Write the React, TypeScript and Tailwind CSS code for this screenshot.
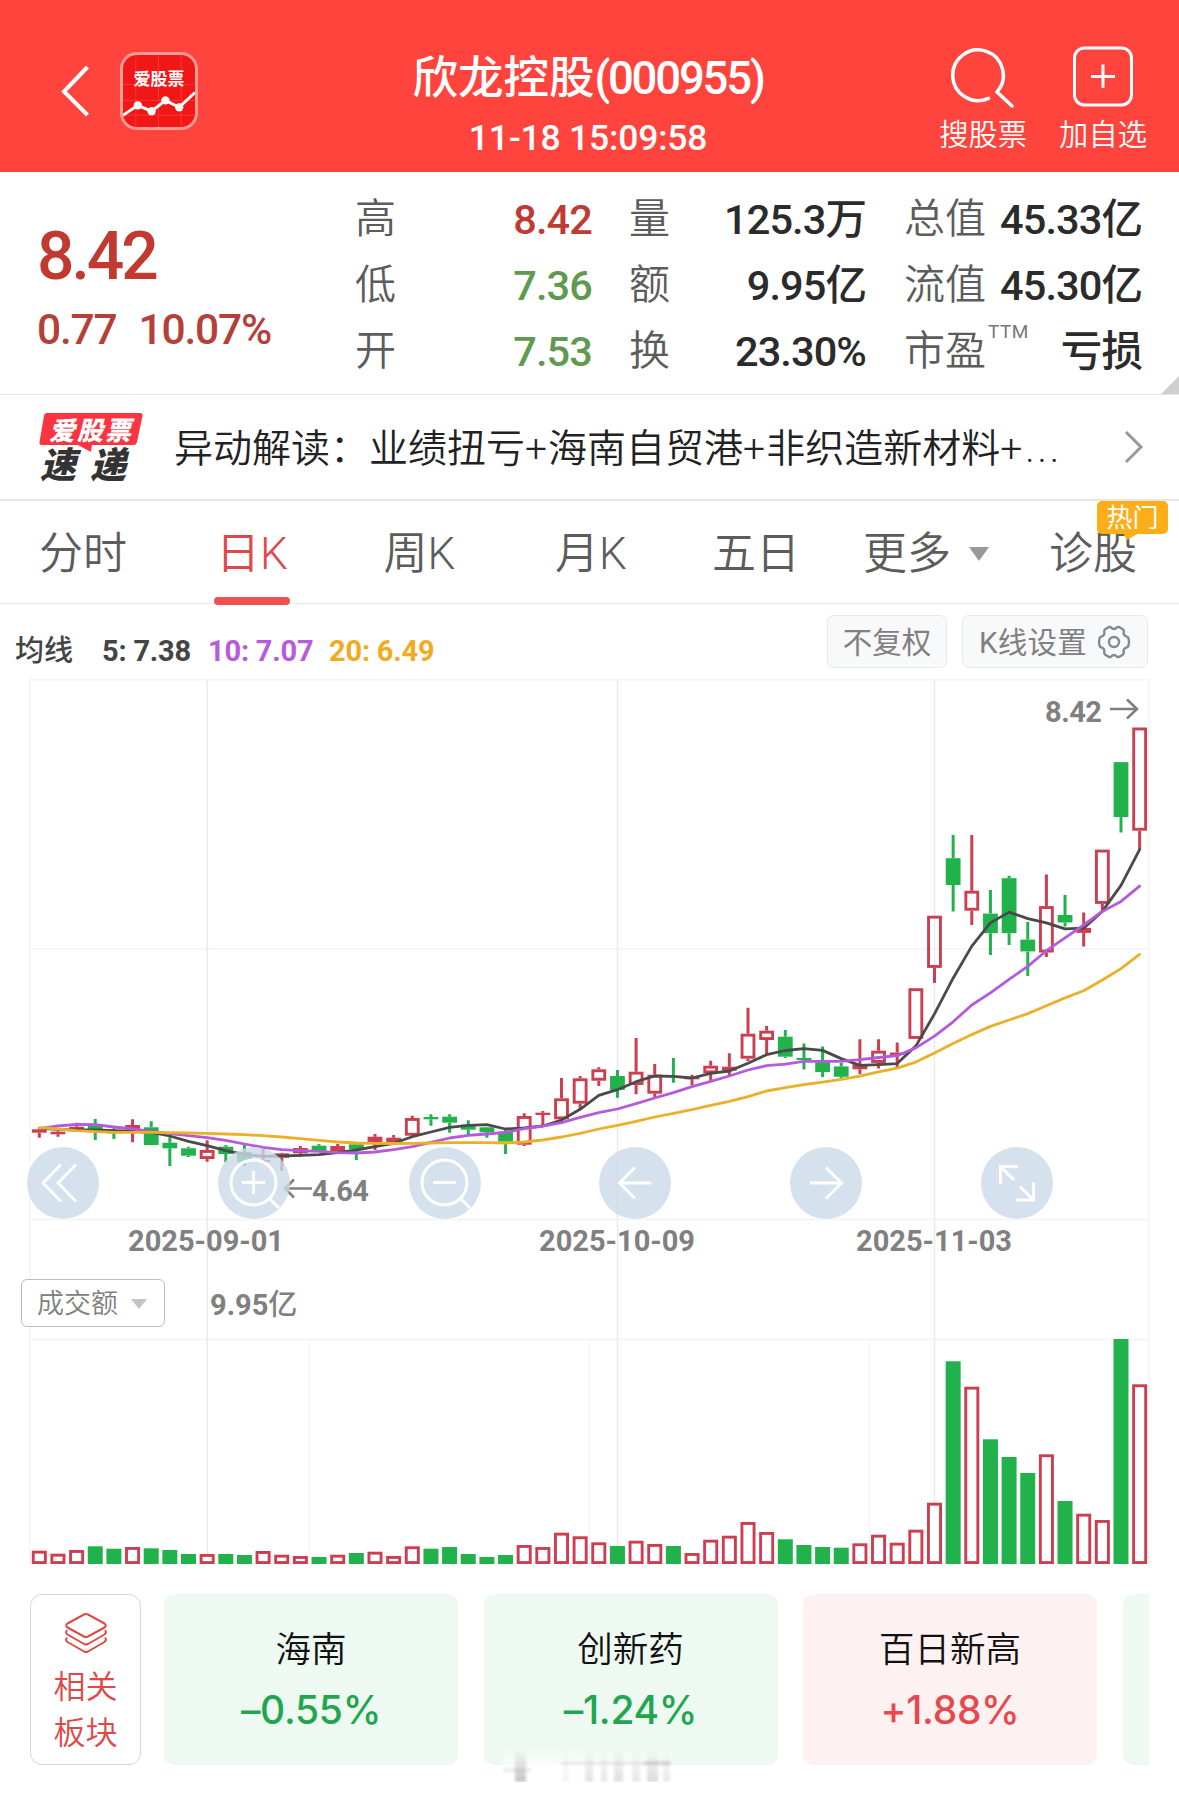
import type { ReactNode } from 'react'

type Candle = [up: number, high: number, top: number, bottom: number, low: number]

const RED = '#cb3f50'
const GREEN = '#22b24c'
const STEP = 18.65
const FIRST_X = 39.3
const BAR = 14.8

const candles: Candle[] = [
  [1, 448.7, 450.3, 453.7, 458.7], [1, 451.7, 452.7, 455.3, 457.7], [1, 443.7, 447.7, 451.7, 452.5],
  [0, 440, 446.3, 451.7, 461], [0, 449.3, 452.3, 454.3, 460], [1, 440.3, 446, 452, 463.3],
  [0, 442.3, 448.3, 466, 466], [0, 458.3, 463.7, 469.3, 487], [0, 467.7, 469.3, 476.7, 478],
  [1, 461.3, 471, 480, 482.7], [0, 466, 467.7, 475, 483.3], [0, 465, 473, 483, 487],
  [1, 468.3, 481, 483, 483.3], [1, 473.7, 474.3, 478.7, 491.7], [1, 467, 469, 474.3, 477.7],
  [0, 465, 466.7, 472, 472], [1, 465, 467, 472.3, 472.3], [0, 465.3, 465.3, 470, 481],
  [1, 455, 457.7, 463.7, 471], [1, 456, 458.7, 463, 465], [1, 436.7, 439, 456.7, 458.3],
  [0, 435.3, 438, 440.3, 446.7], [0, 435.3, 437.7, 443.7, 453.7], [0, 441.3, 445.7, 450.7, 455.7],
  [0, 448, 448.3, 453.3, 458.7], [0, 450, 452.7, 462.7, 475], [1, 434.3, 437, 465.7, 467],
  [1, 432, 433.7, 436, 446], [1, 399, 419.3, 440.3, 445], [1, 397, 399.3, 424.7, 430.3],
  [1, 388.3, 390.3, 401.7, 407], [0, 391, 397, 411, 418.7], [1, 359, 392.7, 406, 415.3],
  [1, 385, 395.7, 414.7, 419.3], [0, 379, 397, 398.5, 403.7], [1, 395.7, 398, 400.3, 406.3],
  [1, 381.7, 386.7, 394.3, 402], [1, 374.3, 387.7, 391.7, 397.7], [1, 328.7, 354.7, 379.7, 382],
  [1, 347, 351.7, 361, 375], [0, 351, 357.7, 377.7, 379], [0, 364.6, 378.9, 381, 390.6],
  [0, 367.4, 383.1, 393.1, 398.1], [0, 383.9, 387.4, 397.8, 399.2], [1, 360.3, 385.3, 390.3, 395.3],
  [1, 360.3, 371.7, 383.9, 389.6], [1, 363.5, 373.5, 376, 389.6], [1, 309.2, 309.2, 359.9, 359.9],
  [1, 236.7, 236.7, 288.9, 303.9], [0, 156, 179.2, 206, 232.4], [1, 156, 211.7, 231.7, 246],
  [0, 211, 234.6, 254.2, 276], [0, 196.7, 199.2, 254.2, 266], [0, 243.1, 260.6, 272.4, 297.1],
  [1, 195.6, 227.1, 273.5, 278.1], [0, 216, 236, 243.5, 247.4], [1, 233.5, 248.9, 253.9, 267.4],
  [1, 170.6, 170.6, 224.9, 231.4], [0, 83.1, 83.1, 138.1, 153.5], [1, 48.5, 48.5, 151.7, 170.6],
]

const volumes = [
  13.3, 10.3, 14, 17.7, 15.3, 17, 15.7, 14, 10, 10, 10, 9, 13, 9.3, 8, 7, 9.3, 11, 12.3, 8,
  17.7, 15.3, 17, 10, 7, 9, 19, 17, 31.3, 27.7, 21.7, 18, 23.3, 20, 18, 11, 24.3, 28.3, 42, 32,
  24.7, 19, 17, 16.3, 20.7, 29.3, 21.3, 34.3, 61.3, 202.7, 177.3, 124.7, 107, 91, 109.7, 63, 50.3, 44, 225.3, 179.7,
]

const ma5 = [
  449.3, 450.3, 451, 451, 451.7, 452.3, 453.3, 457, 462.3, 466.7, 471.7, 475.3, 477.3, 477, 476.3, 475.7, 473.7, 471, 467.7, 464.3,
  457.7, 453, 448.3, 446.3, 445.7, 450, 449, 447, 441, 430.3, 416.3, 410.7, 402.7, 397, 397.3, 399, 394.3, 392, 384.3, 375.7,
  371.5, 369.6, 371.4, 379.6, 386.4, 385.6, 384.6, 367.1, 334.9, 299.2, 267.1, 243.9, 233.1, 239.6, 243.9, 249.9, 249.2, 232.4, 206.4, 170.6,
]
const ma10 = [
  449.7, 447, 445.3, 445.7, 448, 450, 452.3, 454.7, 456.7, 458.7, 461.3, 465, 468.3, 470.7, 471.7, 472.3, 473.7, 474, 473, 470.7,
  467.7, 463.3, 459, 456.3, 455, 453.3, 449.7, 447, 443.7, 438.3, 433.7, 430, 424.7, 419, 413.7, 407.7, 402.3, 397, 391, 386.7,
  385.2, 382.4, 382.4, 382.4, 380.6, 378.5, 376.7, 368.9, 357.1, 342.8, 326, 313.9, 300.3, 287.4, 271.7, 258.9, 246, 232.4, 222.4, 207.1,
]
const ma20 = [
  448.7, 450, 451.7, 452.7, 453.3, 453.3, 453.3, 453.7, 454, 454.3, 455, 455.7, 456.7, 458, 459.7, 461.3, 463, 464, 464.3, 464.5,
  464.3, 464, 463.7, 463.7, 463.7, 464, 463, 461, 458, 454.3, 450, 446.3, 442.3, 438, 434.3, 430.7, 426.3, 422.3, 417.7, 412,
  408.7, 405.6, 403.1, 400.3, 397.1, 392.8, 389.2, 383.1, 373.9, 364.6, 355.6, 347.4, 341, 334.6, 326.7, 318.9, 311.7, 301, 289.6, 275.3,
]

const px = (i: number) => FIRST_X + i * STEP
const toPoints = (values: number[]) => values.map((v, i) => `${px(i).toFixed(1)},${v}`).join(' ')

function Header() {
  return (
    <header className="flex h-[172px] bg-[#ff433d] text-white">
      <div className="flex w-[340px] items-start pl-[60px] pt-[51px]">
        <svg width="32" height="54" viewBox="0 0 32 54" className="mt-[13px]" fill="none" stroke="#fff" strokeWidth="4">
          <path d="M27.500 3L4 27.500L27.500 51" />
        </svg>
        <div className="relative ml-7 mt-px flex h-[78px] w-[78px] justify-center overflow-hidden rounded-[17px] border-[3px] border-[#ff9a94] bg-[#f21717]">
          <svg viewBox="0 0 73 73" className="absolute inset-0 h-full w-full" fill="none">
            <path d="M13 0V73M36 0V73M59 0V73M0 30H73M0 46H73M0 61H73" stroke="#ff4a45" strokeWidth="1" opacity=".6" />
            <path d="M0 61L15 51L29 57L43 46L57 53L73 38" stroke="#fff" strokeWidth="3" />
            <g fill="#fff">
              <circle cx="15" cy="51" r="4.200" />
              <circle cx="29" cy="57" r="4.200" />
              <circle cx="43" cy="46" r="4.200" />
              <circle cx="57" cy="53" r="4.200" />
            </g>
          </svg>
          <span className="relative mt-[15px] whitespace-nowrap text-[17px] font-bold leading-[18px]">爱股票</span>
        </div>
      </div>
      <div className="flex flex-1 flex-col items-center pt-[49px] whitespace-nowrap">
        <h1 className="flex h-[60px] items-center text-[45.500px] font-medium leading-[60px]">
          欣龙控股<span className="tracking-[-2.200px]">(000955)</span>
        </h1>
        <p className="mt-[8px] text-[35.500px] font-medium leading-[42px] tracking-[-0.200px]">11-18 15:09:58</p>
      </div>
      <div className="flex w-[343px] justify-end pr-[32px] pt-[46px] text-[29.300px] font-[350] leading-[34px]">
        <div className="flex flex-col items-center">
          <svg width="66" height="64" viewBox="0 0 66 64" fill="none" stroke="#fff" strokeWidth="3.500">
            <path d="M38.500 52.300A25.300 25.300 0 1 1 47 46L62 60" strokeLinejoin="round" strokeLinecap="round" />
          </svg>
          <span className="mt-[8px]">搜股票</span>
        </div>
        <div className="ml-[32px] flex flex-col items-center">
          <svg width="62" height="64" viewBox="0 0 62 64" fill="none" stroke="#fff" strokeWidth="3">
            <rect x="2.500" y="2" width="57" height="57" rx="10" />
            <path d="M31 18.500V42M19 30.500H43" />
          </svg>
          <span className="mt-[8px]">加自选</span>
        </div>
      </div>
    </header>
  )
}

function Stat({ label, value, color = 'text-[#2b2b2b]', sup }: { label: string; value: string; color?: string; sup?: string }) {
  return (
    <div className="flex h-[66px] items-center justify-between whitespace-nowrap">
      <span className="flex text-[41px] font-[350] leading-[60px] text-[#5c5c5c]">
        {label}
        {sup && <sup className="top-0 mt-[1px] ml-[2px] text-[19px] font-normal leading-[20px] tracking-[0.500px] text-[#777]">{sup}</sup>}
      </span>
      <span className={`pt-[2px] text-[41.500px] font-medium leading-[60px] tracking-[-0.900px] ${color}`}>{value}</span>
    </div>
  )
}

function Quote() {
  return (
    <section className="relative flex h-[223px] border-b border-[#e4e4e4] pt-[14px]">
      <div className="w-[355px] pl-[37px] pt-[33px] text-[#c03a31]">
        <div className="text-[66px] font-medium leading-[76px] tracking-[-3px]">8.42</div>
        <div className="mt-[10px] flex gap-[22px] text-[42.500px] font-medium leading-[50px] tracking-[-1.200px] text-[#b4403a]">
          <span>0.77</span>
          <span>10.07%</span>
        </div>
      </div>
      <div className="w-[237px]">
        <Stat label="高" value="8.42" color="text-[#bf3a32]" />
        <Stat label="低" value="7.36" color="text-[#5f9a50]" />
        <Stat label="开" value="7.53" color="text-[#5f9a50]" />
      </div>
      <div className="ml-[37px] w-[237px]">
        <Stat label="量" value="125.3万" />
        <Stat label="额" value="9.95亿" />
        <Stat label="换" value="23.30%" />
      </div>
      <div className="ml-[38px] w-[238px]">
        <Stat label="总值" value="45.33亿" />
        <Stat label="流值" value="45.30亿" />
        <Stat label="市盈" value="亏损" sup="TTM" />
      </div>
      <svg width="18" height="18" viewBox="0 0 18 18" className="absolute bottom-0 right-0">
        <path d="M18 0V18H0Z" fill="#cfcfcf" />
      </svg>
    </section>
  )
}

function NewsRow() {
  return (
    <section className="flex h-[106px] items-center border-b-2 border-[#e6e6e6] pl-[39px] pr-[35px]">
      <div className="relative h-[76px] w-[104px] shrink-0 whitespace-nowrap">
        <svg viewBox="0 0 104 76" className="absolute inset-0 h-full w-full">
          <path d="M8 4H101Q104 4 103.500 7L98 33Q97.500 36 94 36H53L52 43L39 36H3Q0 36 .5 33L5 7Q5.500 4 8 4Z" fill="#fa3440" />
        </svg>
        <div className="relative flex h-[37px] items-end justify-center pb-px text-[26px] font-black italic leading-[28px] tracking-[2px] text-white">爱股票</div>
        <div className="relative mt-[3px] flex gap-[14px] pl-[1px] text-[36px] font-black italic leading-[34px] text-[#333]">
          <span>速</span>
          <span>递</span>
        </div>
      </div>
      <p className="ml-[31px] flex-1 whitespace-nowrap pt-[3px] text-[39px] font-[350] leading-[50px] text-[#222]">
        异动解读：业绩扭亏<span className="tracking-[1px]">+</span>海南自贸港<span className="tracking-[1px]">+</span>非织造新材料<span className="tracking-[3px]">+...</span>
      </p>
      <svg width="20" height="34" viewBox="0 0 20 34" fill="none" stroke="#999" strokeWidth="3">
        <path d="M2 2L17 17L2 32" />
      </svg>
    </section>
  )
}

function Tabs() {
  return (
    <nav className="flex h-[103px] items-center border-b border-[#e6e6e6] whitespace-nowrap text-[44px] font-[350] leading-[60px] text-[#5c5c5c]">
      <span className="w-[181px] pl-[39px] pt-[3px]">分时</span>
      <span className="relative flex h-[103px] w-[142px] items-center justify-center pt-[3px] text-[#e0484b]">
        日K
        <i className="absolute bottom-[-1px] left-[33px] h-[8px] w-[76px] rounded-full bg-[#ef5052]" />
      </span>
      <span className="w-[193px] pt-[3px] text-center">周K</span>
      <span className="w-[150px] pt-[3px] text-center">月K</span>
      <span className="w-[180px] pt-[3px] text-center">五日</span>
      <span className="flex items-center pl-[17px] pt-[3px]">
        更多
        <svg width="20" height="14" viewBox="0 0 20 14" className="ml-[18px]">
          <path d="M0 0H20L10 14Z" fill="#999" />
        </svg>
      </span>
      <span className="relative ml-[60px] pt-[3px]">
        诊股
        <span className="absolute left-[48px] top-[-20px] flex h-[33px] w-[71px] items-center justify-center rounded-[5px] bg-[#fbae17] pt-[2px] text-[26px] font-normal leading-[33px] text-white">
          热门
          <svg width="20" height="8" viewBox="0 0 20 8" className="absolute left-[24px] top-[32px]">
            <path d="M2 0L6 7L18 0Z" fill="#fbae17" />
          </svg>
        </span>
      </span>
    </nav>
  )
}

function Toolbar() {
  return (
    <div className="flex h-[75px] pl-[15px] pr-[31px] pt-[11px] whitespace-nowrap">
      <div className="flex flex-1 items-center pt-[7px] text-[29px] font-bold leading-[40px] text-[#444]">
        <span className="w-[87px] font-medium">均线</span>
        <span className="w-[106px] tracking-[-0.200px]">5: 7.38</span>
        <span className="w-[121px] tracking-[-0.200px] text-[#b65bdc]">10: 7.07</span>
        <span className="tracking-[-0.200px] text-[#f0ac1e]">20: 6.49</span>
      </div>
      <button className="flex h-[53px] w-[120px] items-center justify-center rounded-[7px] border border-[#e8e8e8] bg-[#f8f9fb] pt-[2px] text-[29.500px] leading-[40px] text-[#808080]">不复权</button>
      <button className="ml-[15px] flex h-[53px] w-[186px] items-center justify-center rounded-[7px] border border-[#e8e8e8] bg-[#f8f9fb] text-[29.500px] leading-[40px] tracking-[0.300px] text-[#808080]">
        <span className="pt-[2px]">K线设置</span>
        <svg width="34" height="34" viewBox="0 0 34 34" fill="none" stroke="#888" strokeWidth="2.400" strokeLinejoin="round" className="ml-[10px]">
          <path d="M12 2Q13.500 1.500 14.500 2.800Q17 5.200 19.500 2.800Q20.500 1.500 22 2L25.800 4.300Q27 5.200 26.700 6.800Q26 10.500 29.800 11.700Q31 12 31.500 13.500Q32.500 17 31.500 20.500Q31 22 29.800 22.300Q26 23.500 26.700 27.200Q27 28.800 25.800 29.700L22 32Q20.500 32.500 19.500 31.200Q17 28.800 14.500 31.200Q13.500 32.500 12 32L8.200 29.700Q7 28.800 7.300 27.200Q8 23.500 4.200 22.300Q3 22 2.500 20.500Q1.500 17 2.500 13.500Q3 12 4.200 11.700Q8 10.500 7.300 6.800Q7 5.200 8.200 4.300Z" />
          <circle cx="17" cy="17" r="5" />
        </svg>
      </button>
    </div>
  )
}

function GridLines() {
  return (
    <svg width="1179" height="886" viewBox="0 0 1179 886" className="absolute left-0 top-0" fill="none" strokeWidth="1.500">
      <path d="M30 0.750H1149.500M30 269.700H1149.500M30 540.500H1149.500M30 660.500H1149.500M30 0V885M1149 0V885M309.500 660V885M589.500 660V885M869.500 660V885" stroke="#f4f4f4" />
      <path d="M207.300 0V885M617.500 0V885M934.500 0V885" stroke="#ebebeb" />
    </svg>
  )
}

function PriceChart() {
  return (
    <svg width="1179" height="540" viewBox="0 0 1179 540" className="relative block" fill="none">
      {candles.map(([up, high, top, bottom, low], i) => {
        const x = px(i)
        const color = up ? RED : GREEN
        const h = bottom - top
        return (
          <g key={i}>
            <path d={`M${x} ${high}V${top}M${x} ${bottom}V${low}`} stroke={color} strokeWidth="3" />
            {up && h > 6.2 ? (
              <rect x={x - BAR / 2 + 1.45} y={top + 1.45} width={BAR - 2.9} height={h - 2.9} stroke={color} strokeWidth="2.900" />
            ) : (
              <rect x={x - BAR / 2} y={top} width={BAR} height={h} fill={color} />
            )}
          </g>
        )
      })}
      <g strokeWidth="2.800" strokeLinejoin="round" strokeLinecap="round">
        <polyline points={toPoints(ma5)} stroke="#4a4a4a" />
        <polyline points={toPoints(ma10)} stroke="#b45adc" />
        <polyline points={toPoints(ma20)} stroke="#ebb02a" />
      </g>
      <g stroke="#808080" strokeWidth="2.600">
        <path d="M1110 30H1136M1127 20.500L1137 30L1127 39.500" />
        <path d="M312 509.500H286M294 500.500L285 509.500L294 518.500" />
      </g>
      <g fill="#808080" className="text-[29px] font-bold">
        <text x="1045" y="43" textLength="57">8.42</text>
        <text x="312" y="522" textLength="57">4.64</text>
      </g>
    </svg>
  )
}

function VolumeChart() {
  return (
    <svg width="1179" height="226" viewBox="0 0 1179 226" className="relative block" fill="none">
      {volumes.map((v, i) =>
        candles[i][0] ? (
          <rect key={i} x={px(i) - 6.05} y={225 - v + 1.45} width="12.100" height={v - 2.9} fill="#fff" stroke={RED} strokeWidth="2.900" />
        ) : (
          <rect key={i} x={px(i) - 7.5} y={225 - v} width="15" height={v} fill={GREEN} />
        ),
      )}
    </svg>
  )
}

function RoundButton({ children }: { children: ReactNode }) {
  return (
    <button className="h-[72px] w-[72px] rounded-full bg-[#cbdae8]/80">
      <svg viewBox="0 0 72 72" width="72" height="72" fill="none" stroke="#fff" strokeWidth="3">
        {children}
      </svg>
    </button>
  )
}

function ChartControls() {
  return (
    <div className="absolute left-[27px] top-[468px] flex gap-[118.800px]">
      <RoundButton>
        <path d="M34 17.500L16 36L34 54.500M49 17.500L31 36L49 54.500" />
      </RoundButton>
      <RoundButton>
        <circle cx="35.500" cy="35.500" r="22.500" />
        <path d="M35.500 24V47M24 35.500H47M51.500 51.500L61 61" />
      </RoundButton>
      <RoundButton>
        <circle cx="35.500" cy="35.500" r="22.500" />
        <path d="M24 35.500H47M51.500 51.500L61 61" />
      </RoundButton>
      <RoundButton>
        <path d="M52 36H21M36 20.500L20.500 36L36 51.500" />
      </RoundButton>
      <RoundButton>
        <path d="M20 36H51M36 20.500L51.500 36L36 51.500" />
      </RoundButton>
      <RoundButton>
        <path d="M19.500 37V19.500H37M20 20L33 33M35 53H52.500V35.500M52 52.500L39 39.500" />
      </RoundButton>
    </div>
  )
}

function Chart() {
  return (
    <section className="relative h-[886px]">
      <GridLines />
      <PriceChart />
      <ChartControls />
      <div className="relative flex h-[45px] whitespace-nowrap text-[29px] font-bold leading-[45px] text-[#808080]">
        <span className="w-[412px] text-center">2025-09-01</span>
        <span className="w-[410px] text-center">2025-10-09</span>
        <span className="w-[224px] text-center">2025-11-03</span>
      </div>
      <div className="relative flex h-[75px] items-start pl-[21px] pt-[15px] text-[#808080]">
        <button className="flex h-[48px] w-[144px] items-center rounded-[6px] border-[1.500px] border-[#bdbdbd] bg-white pl-[15px] pt-[2px] text-[27px] font-[350] leading-[40px]">
          成交额
          <svg width="16" height="10" viewBox="0 0 16 10" className="ml-[13px]">
            <path d="M0 0H16L8 10Z" fill="#c4c4c4" />
          </svg>
        </button>
        <span className="ml-[45px] text-[29px] font-bold leading-[52px]">
          9.95<span className="font-medium">亿</span>
        </span>
      </div>
      <VolumeChart />
    </section>
  )
}

const sectors = [
  { name: '海南', change: '–0.55%', up: false },
  { name: '创新药', change: '–1.24%', up: false },
  { name: '百日新高', change: '+1.88%', up: true },
]

// faded watermark strokes: [x, width, opacity]
const smears = [
  [12, 11, 0.5], [60, 5, 0.12], [82, 8, 0.26], [98, 6, 0.22], [111, 9, 0.28], [129, 8, 0.22], [144, 11, 0.32], [160, 7, 0.2],
]

function Watermark() {
  return (
    <div className="absolute left-[503px] top-[180px] h-[37px] w-[169px] overflow-hidden">
      <div className="h-full bg-gradient-to-b from-white/0 via-white/60 to-white" />
      <svg width="169" height="37" viewBox="0 0 169 37" className="absolute inset-0 blur-[1.500px]">
        <defs>
          <linearGradient id="fade" x1="0" y1="0" x2="0" y2="1">
            <stop offset="0" stopColor="#888" stopOpacity="0" />
            <stop offset="1" stopColor="#888" stopOpacity="1" />
          </linearGradient>
        </defs>
        {smears.map(([x, w, o]) => (
          <rect key={x} x={x} y="4" width={w} height="33" fill="url(#fade)" opacity={o} />
        ))}
        <rect x="0" y="23" width="28" height="4" fill="#888" opacity=".16" />
        <rect x="58" y="17" width="110" height="3" fill="#888" opacity=".16" />
        <rect x="140" y="16" width="28" height="4" fill="#888" opacity=".22" />
      </svg>
    </div>
  )
}

function Sectors() {
  return (
    <section className="relative flex h-[229px] pl-[30px] pr-[30px] pt-[29px]">
      <div className="flex h-[171px] w-[111px] shrink-0 flex-col items-center rounded-[12px] border-[1.500px] border-[#d6d6d6] pt-[17px] text-[32px] font-[350] leading-[46px] text-[#dc4a48]">
        <svg width="44" height="42" viewBox="0 0 44 42" fill="none" stroke="#dc4a48" strokeWidth="2" strokeLinejoin="round" className="mb-[10px]">
          <path d="M20 2.500Q22 1.500 24 2.500L40.500 11.500Q43 13.500 40.500 15.500L24 24.500Q22 25.500 20 24.500L3.500 15.500Q1 13.500 3.500 11.500Z" />
          <path d="M3 18Q1 20.500 3.500 22.500L20 32Q22 33 24 32L40.500 22.500Q43 20.500 41 18" />
          <path d="M3 25.500Q1 28 3.500 30L20 39.500Q22 40.500 24 39.500L40.500 30Q43 28 41 25.500" />
        </svg>
        <span>相关</span>
        <span>板块</span>
      </div>
      <div className="ml-[23px] flex flex-1 gap-[25.500px] overflow-hidden">
        {sectors.map((s) => (
          <div
            key={s.name}
            className={`flex h-[171px] w-[294px] shrink-0 flex-col items-center rounded-[10px] pt-[31px] whitespace-nowrap ${s.up ? 'bg-[#fef1f1]' : 'bg-[#eef9f2]'}`}
          >
            <span className="text-[35.500px] font-[350] leading-[50px] text-[#111]">{s.name}</span>
            <span className={`mt-[10px] font-["Inter",sans-serif] text-[39px] font-medium leading-[50px] tracking-[-0.300px] ${s.up ? 'text-[#e5484d]' : 'text-[#1fa64f]'}`}>{s.change}</span>
          </div>
        ))}
        <div className="h-[171px] w-[294px] shrink-0 rounded-[10px] bg-[#eef9f2]" />
      </div>
      <Watermark />
    </section>
  )
}

export default function App() {
  return (
    <main className='h-[1794px] w-[1179px] overflow-hidden bg-white font-["Roboto","Noto_Sans_CJK_SC",sans-serif]'>
      <Header />
      <Quote />
      <NewsRow />
      <Tabs />
      <Toolbar />
      <Chart />
      <Sectors />
    </main>
  )
}
